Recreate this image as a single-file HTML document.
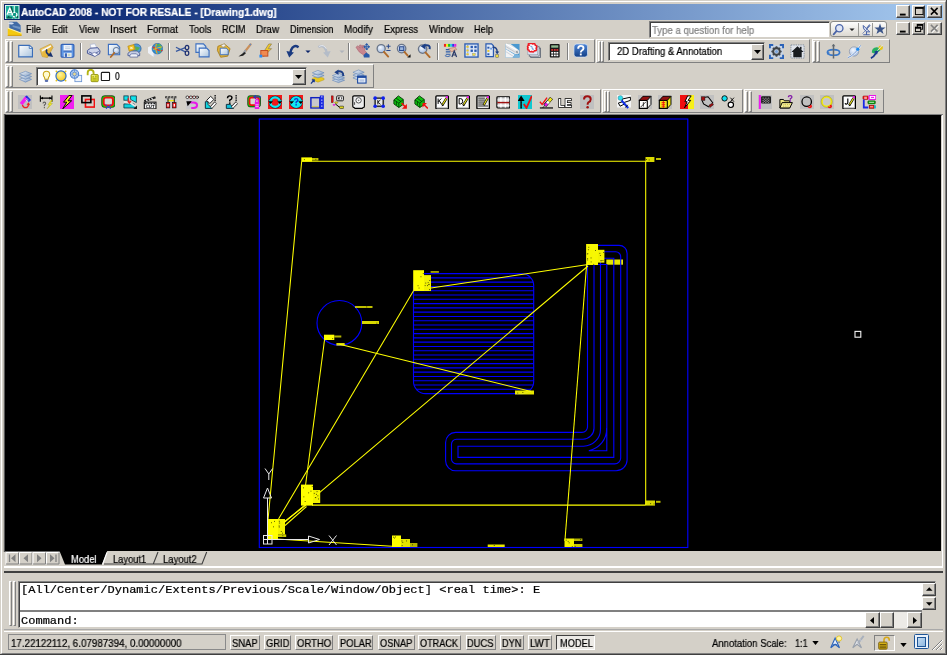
<!DOCTYPE html><html><head><meta charset="utf-8"><title>AutoCAD 2008</title><style>
*{box-sizing:border-box;margin:0;padding:0}
html,body{width:947px;height:655px;overflow:hidden;background:#d4d0c8}
body{position:relative;font-family:"Liberation Sans",sans-serif;font-size:10.4px;color:#000}
.a{position:absolute}
.t{position:absolute;white-space:nowrap;line-height:12px;will-change:transform;-webkit-text-stroke:.22px}
.tb{position:absolute;height:24px;border-top:1px solid #fff;border-left:1px solid #fff;border-right:1px solid #808080;border-bottom:1px solid #808080}
.grip{position:absolute;width:3px;border-top:1px solid #fff;border-left:1px solid #fff;border-right:1px solid #808080;border-bottom:1px solid #808080}
.sep{position:absolute;width:2px;height:17px;border-left:1px solid #808080;border-right:1px solid #fff}
.ic{position:absolute;width:15px;height:15px;will-change:transform}
.btn{position:absolute;background:#d4d0c8;border-top:1px solid #fff;border-left:1px solid #fff;border-right:1px solid #404040;border-bottom:1px solid #404040;box-shadow:inset -1px -1px 0 #808080}
.sunk{position:absolute;border-top:1px solid #808080;border-left:1px solid #808080;border-right:1px solid #fff;border-bottom:1px solid #fff}
.sunk2{position:absolute;background:#fff;border-top:1px solid #808080;border-left:1px solid #808080;border-right:1px solid #d4d0c8;border-bottom:1px solid #d4d0c8;box-shadow:inset 1px 1px 0 #404040}
.sb{position:absolute;top:634.5px;height:15.5px;border-top:1px solid #fff;border-left:1px solid #fff;border-right:1px solid #808080;border-bottom:1px solid #808080}
</style></head><body style="filter:blur(.35px)">
<svg width="0" height="0" style="position:absolute"><defs>
<linearGradient id="gpage" x1="0" y1="0" x2="1" y2="1"><stop offset="0" stop-color="#ffffff"/><stop offset="1" stop-color="#a9c3dd"/></linearGradient>
<linearGradient id="gfold" x1="0" y1="0" x2="1" y2="1"><stop offset="0" stop-color="#f7dc8a"/><stop offset="1" stop-color="#d89b1e"/></linearGradient>
<linearGradient id="gblue" x1="0" y1="0" x2="0" y2="1"><stop offset="0" stop-color="#6f9be0"/><stop offset="1" stop-color="#1f4fa8"/></linearGradient>
<radialGradient id="gglass" cx=".4" cy=".35" r=".7"><stop offset="0" stop-color="#f4f8ff"/><stop offset="1" stop-color="#9db7dc"/></radialGradient>
<radialGradient id="gsun" cx=".4" cy=".35" r=".7"><stop offset="0" stop-color="#fff59a"/><stop offset="1" stop-color="#f2c81e"/></radialGradient>
<linearGradient id="glay" x1="0" y1="0" x2="1" y2="1"><stop offset="0" stop-color="#f6f8fb"/><stop offset="1" stop-color="#7d9bc2"/></linearGradient>
<linearGradient id="ghelp" x1="0" y1="0" x2="0" y2="1"><stop offset="0" stop-color="#4d86d8"/><stop offset="1" stop-color="#123f86"/></linearGradient>
</defs></svg>
<div class="a" style="left:0;top:0;width:947px;height:655px;border-right:1px solid #404040;border-bottom:1px solid #404040"></div>
<div class="a" style="left:1px;top:1px;width:945px;height:653px;border-top:1px solid #fff;border-left:1px solid #fff;border-right:1px solid #808080;border-bottom:1px solid #808080"></div>
<div class="a" style="left:4px;top:4px;width:939px;height:16px;background:linear-gradient(90deg,#0a246a 0%,#12307a 12%,#a6caf0 100%)"></div>
<svg class="a" style="left:5.300px;top:4.800px" width="14.500" height="14.500" viewBox="0 0 16 16"><rect x="0" y="0" width="16" height="16" fill="#eef8f5"/><rect x="1" y="1" width="14" height="14" fill="#1ab39e"/><path d="M4 2.500L7.500 1.500L9.500 9.500L8 10z" fill="#04594a"/><rect x="11.500" y="1.500" width="2.800" height="8" fill="#0d8a78"/><path d="M2 13.500H7.500V14.800H2zM3 11.800H5V13.500H3z" fill="#04594a"/><path d="M9 13.500h1.500v1.300H9zM12.800 12.200h1.700v2.400h-1.700z" fill="#04594a"/><path d="M10.300 1V8" stroke="#cdeee7" stroke-width="1.300"/><path d="M2.300 10.500L5.300 3.300L8.300 10.500M3.400 8.300H7.200" stroke="#fff" stroke-width="1.500" fill="none"/><path d="M1.500 10.800H8.500" stroke="#d8f2ec" stroke-width=".8"/><circle cx="10.600" cy="10.600" r="2.500" fill="#0c9482" stroke="#fff" stroke-width="1.400" stroke-dasharray="2.200 .9"/></svg>
<div class="t" style="left:21.4px;top:5.8px;font-size:11px;font-weight:bold;color:#fff;transform:scaleX(0.9294);transform-origin:0 0;">AutoCAD 2008 - NOT FOR RESALE - [Drawing1.dwg]</div>
<div class="btn" style="left:896.3px;top:5.2px;width:14px;height:12.500px"><svg class="a" style="left:0;top:0" width="12.500" height="10.500" viewBox="0 0 13 11"><rect x="3" y="8" width="6" height="2" fill="#000"/></svg></div>
<div class="btn" style="left:911.5px;top:5.2px;width:13.5px;height:12.500px"><svg class="a" style="left:0;top:0" width="12.500" height="10.500" viewBox="0 0 13 11"><rect x="2.500" y="1.500" width="8" height="7.500" fill="none" stroke="#000"/><rect x="2" y="1" width="9" height="2" fill="#000"/></svg></div>
<div class="btn" style="left:927px;top:5.2px;width:14.7px;height:12.500px"><svg class="a" style="left:0;top:0" width="12.500" height="10.500" viewBox="0 0 13 11"><path d="M3 2L10 9M10 2L3 9" stroke="#000" stroke-width="1.600"/></svg></div>
<div class="btn" style="left:896.3px;top:22.3px;width:14px;height:12.500px"><svg class="a" style="left:0;top:0" width="12.500" height="10.500" viewBox="0 0 13 11"><rect x="3" y="8" width="6" height="2" fill="#000"/></svg></div>
<div class="btn" style="left:911.5px;top:22.3px;width:13.5px;height:12.500px"><svg class="a" style="left:0;top:0" width="12.500" height="10.500" viewBox="0 0 13 11"><rect x="4.500" y="1.500" width="5.500" height="5" fill="none" stroke="#000"/><rect x="4" y="1" width="6.500" height="2" fill="#000"/><rect x="2.500" y="4.500" width="5.500" height="4.500" fill="#d4d0c8" stroke="#000"/><rect x="2" y="4" width="6.500" height="2" fill="#000"/></svg></div>
<div class="btn" style="left:927px;top:22.3px;width:14.7px;height:12.500px"><svg class="a" style="left:0;top:0" width="12.500" height="10.500" viewBox="0 0 13 11"><path d="M4 3L11 10M11 3L4 10" stroke="#fff" stroke-width="1.200"/><path d="M3 2L10 9M10 2L3 9" stroke="#808080" stroke-width="1.600"/></svg></div>
<svg class="a" style="left:7px;top:21.300px" width="15" height="15" viewBox="0 0 16 16"><path d="M2.500 .8H10.500L14.500 4.500V13L2.500 8z" fill="#3f6aa6"/><path d="M6 4.500L14.500 6.500V9L6 6.500z" fill="#6d93c4"/><path d="M1 2.500Q4 0 7.500 2.500Q5 5 1 2.500z" fill="#e4ecf7" opacity=".9"/><path d="M.8 7.500L15.500 13V15.800H.8z" fill="#f4c90f"/><path d="M.8 7.500L15.500 13" stroke="#fdf0a0" stroke-width="1.200"/><path d="M.8 14.800H15.500V15.800H.8z" fill="#d49d0a"/></svg>
<div class="t" style="left:26.0px;top:22.8px;font-size:10.5px;transform:scaleX(0.8865);transform-origin:0 0;">File</div>
<div class="t" style="left:52.0px;top:22.8px;font-size:10.5px;transform:scaleX(0.8567);transform-origin:0 0;">Edit</div>
<div class="t" style="left:79.0px;top:22.8px;font-size:10.5px;transform:scaleX(0.8861);transform-origin:0 0;">View</div>
<div class="t" style="left:109.5px;top:22.8px;font-size:10.5px;transform:scaleX(1.0091);transform-origin:0 0;">Insert</div>
<div class="t" style="left:146.5px;top:22.8px;font-size:10.5px;transform:scaleX(0.9322);transform-origin:0 0;">Format</div>
<div class="t" style="left:188.5px;top:22.8px;font-size:10.5px;transform:scaleX(0.9179);transform-origin:0 0;">Tools</div>
<div class="t" style="left:222.0px;top:22.8px;font-size:10.5px;transform:scaleX(0.8759);transform-origin:0 0;">RCIM</div>
<div class="t" style="left:256.0px;top:22.8px;font-size:10.5px;transform:scaleX(0.9387);transform-origin:0 0;">Draw</div>
<div class="t" style="left:289.5px;top:22.8px;font-size:10.5px;transform:scaleX(0.8769);transform-origin:0 0;">Dimension</div>
<div class="t" style="left:343.5px;top:22.8px;font-size:10.5px;transform:scaleX(0.9377);transform-origin:0 0;">Modify</div>
<div class="t" style="left:383.5px;top:22.8px;font-size:10.5px;transform:scaleX(0.8964);transform-origin:0 0;">Express</div>
<div class="t" style="left:428.5px;top:22.8px;font-size:10.5px;transform:scaleX(0.9238);transform-origin:0 0;">Window</div>
<div class="t" style="left:474.0px;top:22.8px;font-size:10.5px;transform:scaleX(0.8798);transform-origin:0 0;">Help</div>
<div class="sunk2" style="left:648.500px;top:21px;width:181.500px;height:17px"></div>
<div class="t" style="left:651.8px;top:23.6px;font-size:10.5px;color:#808080;transform:scaleX(0.9119);transform-origin:0 0;">Type a question for help</div>
<div class="a" style="left:830px;top:21px;width:57px;height:15.500px;border:1px solid #8a8a86;border-radius:3px;background:linear-gradient(#fdfdfc,#dcd9d2)"></div>
<div class="a" style="left:858px;top:22.500px;width:1px;height:13px;background:#9a9a96"></div>
<div class="a" style="left:872px;top:22.500px;width:1px;height:13px;background:#9a9a96"></div>
<svg class="a" style="left:832px;top:22.500px" width="13" height="13" viewBox="0 0 16 16"><circle cx="9" cy="6.500" r="4.500" fill="#dfe6f6" stroke="#4a64a8" stroke-width="1.600"/><path d="M5.500 10L2 14" stroke="#4a64a8" stroke-width="2.200" stroke-linecap="round"/></svg>
<svg class="a" style="left:848.500px;top:27.500px" width="6" height="3.500" viewBox="0 0 7 4"><path d="M.5 .5h6L3.500 3.500z" fill="#222"/></svg>
<svg class="a" style="left:859.500px;top:22.500px" width="13" height="13" viewBox="0 0 16 16"><path d="M4 3A7 7 0 0 0 12 11Z" fill="#dfe6f6" stroke="#4a64a8" stroke-width="1.200"/><path d="M8 7L12 2M8 11V14M4 14.500H12" stroke="#4a64a8" stroke-width="1.300"/><path d="M3 13L13 3" stroke="#4a64a8" stroke-width=".8"/></svg>
<svg class="a" style="left:874px;top:23px" width="12" height="12" viewBox="0 0 12 12"><path d="M6 .5L7.400 4.400L11.600 4.500L8.300 7L9.500 11L6 8.600L2.500 11L3.700 7L.4 4.500L4.600 4.400z" fill="#3a5488"/></svg>
<div class="tb" style="left:4.5px;top:39px;width:590.5px"></div>
<div class="grip" style="left:6.3px;top:40.5px;height:21px"></div><div class="grip" style="left:9.7px;top:40.5px;height:21px"></div>
<svg class="ic" style="left:18.0px;top:43.4px;width:15px;height:15px" viewBox="0 0 16 16"><path d="M.8 2.500H12.200L15.500 5.500V14.800H.8z" fill="url(#gpage)" stroke="#3a6db8" stroke-width="1.300"/><path d="M12 2.800V5.800H15.200" fill="#f4f8fc" stroke="#3a6db8" stroke-width=".9"/></svg>
<svg class="ic" style="left:39.0px;top:43.4px;width:15px;height:15px" viewBox="0 0 16 16"><path d="M1 6.500L12.500 1L15 4.500L9 15.500L3.500 14.500z" fill="url(#gfold)" stroke="#c49a30" stroke-width=".7"/><path d="M3 7.500L12.500 2.500L13 4L4 10z" fill="#f8fafc"/><path d="M3.500 9L13.500 4L8.500 15L4 14z" fill="#e9b93a" opacity=".85"/><path d="M8.500 7Q6.500 10 10.500 12.500" fill="none" stroke="#16306e" stroke-width="1.800"/><path d="M9 13.800L15 14.800L12.500 9.500z" fill="#16306e"/></svg>
<svg class="ic" style="left:59.5px;top:43.4px;width:15px;height:15px" viewBox="0 0 16 16"><rect x="1.200" y="1.500" width="13.600" height="13.600" rx="1.200" fill="#5f97e4" stroke="#3463b8" stroke-width="1.300"/><rect x="3.800" y="2.200" width="8.600" height="6" fill="#f2f6fb"/><path d="M5.500 4.200H11M5.500 6H11" stroke="#aebfd8" stroke-width=".8"/><path d="M3.800 8.600H12.400" stroke="#2f58a8" stroke-width=".9"/><rect x="4" y="10.500" width="8.400" height="4.400" fill="#e4e9f0"/><rect x="5.200" y="11" width="2.200" height="3.800" fill="#3463b8"/><rect x="8.500" y="11.500" width="2.500" height="2.500" fill="#c8d8c0"/></svg>
<div class="sep" style="left:79.8px;top:43px"></div>
<svg class="ic" style="left:86.3px;top:43.4px;width:15px;height:15px" viewBox="0 0 16 16"><path d="M4.500 1.500L9.500 .8L12 6L5.500 7z" fill="#fafbfe" stroke="#a8b2d0" stroke-width=".7"/><path d="M1.500 8L5 5.500L12.500 5L15 8.500L14.500 11.500L9 14L1.500 11z" fill="#cdd4ea" stroke="#3f4f90" stroke-width="1"/><path d="M3 9.500L8.500 12L13.500 9" fill="none" stroke="#3f4f90" stroke-width=".9"/><path d="M5.500 11.500L9 10L13 12L9.500 14.500z" fill="#f6f7fb" stroke="#5a68a0" stroke-width=".7"/></svg>
<svg class="ic" style="left:106.5px;top:43.4px;width:15px;height:15px" viewBox="0 0 16 16"><path d="M1.500 1.500H10.500L13.500 4.500V12.500H1.500z" fill="url(#gpage)" stroke="#3c6fc0" stroke-width="1.200"/><circle cx="10" cy="8" r="3.300" fill="url(#gglass)" stroke="#6a7f9c" stroke-width="1.100"/><path d="M7.700 10.500L4 15" stroke="#b06a2a" stroke-width="1.800" stroke-linecap="round"/></svg>
<svg class="ic" style="left:127.1px;top:43.4px;width:15px;height:15px" viewBox="0 0 16 16"><circle cx="10" cy="6" r="5" fill="#4f9bd6" stroke="#2a5fa0" stroke-width=".8"/><path d="M7 3q3 2 2 6q3-1 5-4" fill="#58b058" stroke="none"/><path d="M1 11L4 8.500H11L13.500 11V13.500H1z" fill="#c3cce4" stroke="#44558f" stroke-width=".9"/><path d="M3 13L5 11.500H10L11.500 13V15H3z" fill="#eef1f8" stroke="#44558f" stroke-width=".7"/><rect x="1.500" y="2.500" width="6.500" height="5.500" fill="#f0c020" stroke="#b88a10" stroke-width=".7" transform="rotate(-15 4.500 5)"/><path d="M3.500 4.500l2.500 1.500M6 4l-2.500 2.500" stroke="#fff" stroke-width=".9"/></svg>
<svg class="ic" style="left:148.3px;top:43.4px;width:15px;height:15px" viewBox="0 0 16 16"><path d="M0 4.500L5.500 2L6.100 8.800L6.100 14.900L0 10.700z" fill="#eef1f7"/><path d="M6.100 8.800V14.900L11.800 11.600V8z" fill="#c9d0dc"/><circle cx="10" cy="6" r="5.700" fill="#2f8fd4" stroke="#2a62a0" stroke-width=".6"/><path d="M8.500 2Q11 0 14 2.500Q12 4 10 3.500z" fill="#48b060"/><path d="M5 4Q10 8.500 15.500 8" stroke="#e23a2a" stroke-width="1.300" fill="none"/><path d="M9 .8Q7 6.500 10 11.500" stroke="#e8a820" stroke-width="1.200" fill="none"/><path d="M12 1.200Q15 5 12.500 10.500" stroke="#58b858" stroke-width="1.100" fill="none"/><path d="M5.500 7Q10 5 15.200 4" stroke="#e8c020" stroke-width="1" fill="none"/></svg>
<div class="sep" style="left:167.8px;top:43px"></div>
<svg class="ic" style="left:174.5px;top:43.4px;width:15px;height:15px" viewBox="0 0 16 16"><path d="M1 4.500L11 9.500M1 9L11 5" stroke="#3a5aa0" stroke-width="1.300" fill="none"/><ellipse cx="12.800" cy="4.800" rx="1.900" ry="2.300" fill="none" stroke="#1d2f70" stroke-width="1.300"/><ellipse cx="12.800" cy="10.800" rx="1.900" ry="2.300" fill="none" stroke="#1d2f70" stroke-width="1.300"/></svg>
<svg class="ic" style="left:195.2px;top:43.4px;width:15px;height:15px" viewBox="0 0 16 16"><path d="M1 1H9L11.500 3.500V10H1z" fill="url(#gpage)" stroke="#3c6fc0" stroke-width="1.200"/><path d="M4.500 5.500H12.500L15 8V14.800H4.500z" fill="url(#gpage)" stroke="#3c6fc0" stroke-width="1.200"/></svg>
<svg class="ic" style="left:215.5px;top:43.4px;width:15px;height:15px" viewBox="0 0 16 16"><path d="M2 3.500L9 1L15 6L12.500 14L5 15.200L1.500 8z" fill="#e2b43a" stroke="#a87d18" stroke-width=".9"/><path d="M5.500 2.500l3-1.500l2 1.500l-3 2z" fill="#f4f4f4" stroke="#909090" stroke-width=".5"/><path d="M4.500 5.500H11L13 7.500V12.500H4.500z" fill="url(#gpage)" stroke="#3c6fc0" stroke-width="1"/></svg>
<svg class="ic" style="left:237.3px;top:43.4px;width:15px;height:15px" viewBox="0 0 16 16"><path d="M14.500 1.500L8.500 9" stroke="#c98f5a" stroke-width="2.400" stroke-linecap="round"/><path d="M13.500 1L14.800 2.200" stroke="#5a8ad0" stroke-width="1.500"/><path d="M9.500 7.500L7 11" stroke="#9aa0a8" stroke-width="2.400"/><path d="M8 9.500L1.500 14.500L6.500 13.500L9.500 11z" fill="#222"/></svg>
<svg class="ic" style="left:257.5px;top:43.4px;width:15px;height:15px" viewBox="0 0 16 16"><path d="M11.500 1L7 8H10L6 14.500L14.500 6H11L14.500 1z" fill="#f0c828" stroke="#8a7a50" stroke-width=".7"/><rect x="3" y="8" width="7.500" height="6" fill="#f08a50" stroke="#c04a20" stroke-width="1"/><rect x="1.500" y="12.500" width="3" height="3" fill="#2a8af0"/></svg>
<div class="sep" style="left:277.5px;top:43px"></div>
<svg class="ic" style="left:285.1px;top:43.4px;width:15px;height:15px" viewBox="0 0 16 16"><path d="M14.500 4.500Q9 1 6.500 7.500L5.500 11" fill="none" stroke="#1a3a80" stroke-width="2.600"/><path d="M1.500 8.500L9.500 10L4.500 15.500z" fill="#1a3a80"/></svg>
<svg class="a" style="left:305.4px;top:49.5px" width="6" height="3.500" viewBox="0 0 7 4"><path d="M.5 .5h6L3.500 3.500z" fill="#0a246a"/></svg>
<svg class="ic" style="left:317.2px;top:43.4px;width:15px;height:15px" viewBox="0 0 16 16"><path d="M1.500 4.500Q7 1 9.500 7.500L10.500 11" fill="none" stroke="#b4bcc8" stroke-width="2.600"/><path d="M14.500 8.500L6.500 10L11.500 15.500z" fill="#b4bcc8"/><path d="M2 3.800Q7 .8 9.800 6" fill="none" stroke="#eef0f4" stroke-width=".9"/></svg>
<svg class="a" style="left:338.5px;top:49.5px" width="6" height="3.500" viewBox="0 0 7 4"><path d="M.5 .5h6L3.500 3.500z" fill="#b0b4bc"/></svg>
<div class="sep" style="left:347.7px;top:43px"></div>
<svg class="ic" style="left:354.5px;top:43.4px;width:15px;height:15px" viewBox="0 0 16 16"><path d="M1 4.500L3 3L5.500 5.500L4.500 2.500L6.500 2L8 5.500L8 2.500L10 3L10.500 8L12.500 10.500L9.500 13L4.500 9.500z" fill="#c8868e" stroke="#a8606c" stroke-width=".6"/><path d="M9 13L12 10L15.500 12.500V15.500H9.500z" fill="#2a5aa8"/><path d="M12.500 1V7M9.800 4H15.200M12.500 .5l-1.200 1.500h2.400zM12.500 7.500l-1.200-1.500h2.400zM9.300 4l1.500-1.200v2.400zM15.700 4l-1.500-1.200v2.400z" stroke="#2a5aa8" stroke-width=".9" fill="#2a5aa8"/></svg>
<svg class="ic" style="left:375.5px;top:43.4px;width:15px;height:15px" viewBox="0 0 16 16"><circle cx="5.500" cy="6" r="4.300" fill="url(#gglass)" stroke="#6a7588" stroke-width="1.400"/><path d="M8.500 9.500L13 14.500" stroke="#b06a2a" stroke-width="2" stroke-linecap="round"/><path d="M11 3.500H15.500M13.200 1.200V5.800M11 8H15.500" stroke="#2a4a90" stroke-width="1.100"/></svg>
<svg class="ic" style="left:396.0px;top:43.4px;width:15px;height:15px" viewBox="0 0 16 16"><circle cx="6" cy="6" r="4.500" fill="url(#gglass)" stroke="#6a7588" stroke-width="1.400"/><rect x="3.800" y="4" width="4.500" height="4" fill="#9db7dc" stroke="#2a4a90" stroke-width="1.100"/><path d="M9 9.500L12.500 13.500" stroke="#b06a2a" stroke-width="2" stroke-linecap="round"/><path d="M15.500 12V15.500H12z" fill="#111"/></svg>
<svg class="ic" style="left:416.5px;top:43.4px;width:15px;height:15px" viewBox="0 0 16 16"><circle cx="6" cy="6.500" r="4.500" fill="url(#gglass)" stroke="#6a7588" stroke-width="1.400"/><path d="M9 10L13.500 15" stroke="#b06a2a" stroke-width="2" stroke-linecap="round"/><path d="M13.500 6.500Q14.500 1.500 8.500 2.500" fill="none" stroke="#1d3f86" stroke-width="2.200"/><path d="M4 3.500L9 0.500V7z" fill="#1d3f86"/></svg>
<div class="sep" style="left:437.0px;top:43px"></div>
<svg class="ic" style="left:443.3px;top:43.4px;width:15px;height:15px" viewBox="0 0 16 16"><rect x="1" y="1" width="2.200" height="3" fill="#f02020"/><rect x="3.200" y="1" width="2.200" height="3" fill="#f0f020"/><rect x="5.400" y="1" width="2.200" height="3" fill="#20c020"/><rect x="7.600" y="1" width="2.200" height="3" fill="#20d0e0"/><rect x="9.800" y="1" width="2.200" height="3" fill="#3030f0"/><rect x="12" y="1" width="2.200" height="3" fill="#e020e0"/><path d="M3 7H8M3 9.500H8M3 12H8" stroke="#2a5aa8" stroke-width="1.200"/><path d="M2 13.500Q5 15.500 8 13.500" stroke="#2a5aa8" stroke-width="1" fill="none"/><path d="M6 6L13 4.500L14.500 7L9 9.500z" fill="#e8b8a0" stroke="#a86a58" stroke-width=".6"/><path d="M9.500 15L12 8.500L14.500 15M10.500 12.800H13.500" stroke="#2a3a68" stroke-width="1.300" fill="none"/></svg>
<svg class="ic" style="left:463.5px;top:43.4px;width:15px;height:15px" viewBox="0 0 16 16"><rect x="1" y="1" width="14" height="14" fill="#dfe8f6" stroke="#2a5ab0" stroke-width="1.400"/><path d="M4 2V14" stroke="#2a5ab0" stroke-width=".8" stroke-dasharray="1 1"/><rect x="2.500" y="3" width="2.500" height="2" fill="#e8c830"/><rect x="2.500" y="7" width="2.500" height="2" fill="#e8c830"/><rect x="2.500" y="11" width="2.500" height="2" fill="#e8c830"/><rect x="7" y="3" width="2.500" height="2.500" fill="#2a5ab0"/><rect x="11" y="3" width="2.500" height="2.500" fill="#2a5ab0"/><rect x="7" y="7" width="2.500" height="2.500" fill="#2a5ab0"/><rect x="11" y="7" width="2.500" height="2.500" fill="#2a5ab0"/><rect x="9" y="11" width="3" height="2.500" fill="#f0e040" stroke="#888" stroke-width=".4"/></svg>
<svg class="ic" style="left:484.5px;top:43.4px;width:15px;height:15px" viewBox="0 0 16 16"><path d="M1 1H7L9 3V14.500H1z" fill="#dfe8f6" stroke="#2a5ab0" stroke-width="1.300"/><rect x="2.500" y="4" width="2.200" height="2" fill="#2a5ab0"/><rect x="2.500" y="7.500" width="2.200" height="2" fill="#e8c830"/><rect x="2.500" y="11" width="2.200" height="2" fill="#2a5ab0"/><rect x="5.500" y="5" width="2" height="2" fill="#6a9ae0"/><path d="M8 4.500Q13 4 13 9.500" fill="none" stroke="#1d3f86" stroke-width="1.500"/><path d="M10.800 9L13 12L15.200 9z" fill="#1d3f86"/><rect x="11.500" y="12.500" width="3" height="2.800" fill="#f0e040" stroke="#555" stroke-width=".5"/></svg>
<svg class="ic" style="left:505.2px;top:43.4px;width:15px;height:15px" viewBox="0 0 16 16"><rect x=".5" y="1" width="15" height="14.500" fill="#4a98d0"/><path d="M.5 1H6L14.500 7.500Q16 10 14 11.500L11 12L.5 6z" fill="#e4e7ea"/><path d="M.5 3.500L12 10.500" stroke="#b4bac0" stroke-width=".8"/><path d="M1 1L13.500 8" stroke="#fff" stroke-width="1.200"/><ellipse cx="12.800" cy="9.800" rx="1.500" ry="2" fill="#9aa2aa" stroke="#f4f4f4" stroke-width=".7" transform="rotate(-30 12.800 9.800)"/><path d="M.5 6.500L10.500 12.500L8 15.500H.5z" fill="#f2f3f5"/><path d="M.5 9L8.500 14" stroke="#c0c6cc" stroke-width=".8"/><path d="M8 15.500L11 12L15.500 13V15.500z" fill="#7ab4dc"/></svg>
<svg class="ic" style="left:526.0px;top:43.4px;width:15px;height:15px" viewBox="0 0 16 16"><rect x="5" y="5.500" width="10.500" height="10" fill="#e8eef8" stroke="#5a6270" stroke-width=".9"/><rect x="3.500" y="4" width="10.500" height="10" fill="#eef3fb" stroke="#5a6270" stroke-width=".9"/><rect x="2" y="2.500" width="10.500" height="10" fill="#dfe8f6" stroke="#8a94a4" stroke-width=".6"/><path d="M3 2.500Q1.500 .5 4 .8Q5.500 -.5 7 1Q9.500 0 10 2.500Q12.500 3.500 10.800 5.500Q12 8.500 9 8.300Q8 10.500 6 9Q3.500 10 3.200 7.800Q.8 7 2.200 5Q.8 3.500 3 2.500z" fill="#f8fbff" stroke="#ee1c24" stroke-width="1.700"/><path d="M4.500 3.500Q6.500 3 6.500 5Q6.500 7 8.500 6.500" fill="none" stroke="#6aa0d8" stroke-width="1.100"/></svg>
<svg class="ic" style="left:547.0px;top:43.4px;width:15px;height:15px" viewBox="0 0 16 16"><rect x="3" y="1" width="10.500" height="14.500" rx="1" fill="#181818"/><rect x="4.500" y="2.500" width="7.500" height="2.500" fill="#8fb88f"/><rect x="4.500" y="6.500" width="2" height="1.800" fill="#e03030"/><rect x="7.300" y="6.500" width="2" height="1.800" fill="#e03030"/><rect x="10" y="6.500" width="2" height="1.800" fill="#e03030"/><rect x="4.500" y="9.500" width="2" height="1.800" fill="#fff"/><rect x="7.300" y="9.500" width="2" height="1.800" fill="#fff"/><rect x="10" y="9.500" width="2" height="1.800" fill="#fff"/><rect x="4.500" y="12.300" width="2" height="1.800" fill="#fff"/><rect x="7.300" y="12.300" width="2" height="1.800" fill="#fff"/><rect x="10" y="12.300" width="2" height="1.800" fill="#fff"/></svg>
<div class="sep" style="left:567.1px;top:43px"></div>
<svg class="ic" style="left:573.4px;top:43.4px;width:15px;height:15px" viewBox="0 0 16 16"><rect x="1" y="1" width="14.500" height="14" rx="3" fill="url(#ghelp)" stroke="#d8e4f4" stroke-width=".8"/><path d="M5.500 6Q5.500 3 8.300 3Q11.200 3 11.200 5.500Q11.200 7 9.500 8Q8.300 8.800 8.300 10" fill="none" stroke="#fff" stroke-width="2"/><rect x="7.300" y="11.200" width="2" height="2" fill="#fff"/></svg>
<div class="tb" style="left:596px;top:39px;width:214px"></div>
<div class="grip" style="left:597.8px;top:40.5px;height:21px"></div><div class="grip" style="left:601.2px;top:40.5px;height:21px"></div>
<svg class="ic" style="left:768.5px;top:43.6px;width:15px;height:15px" viewBox="0 0 16 16"><rect x="1" y="1" width="14" height="14" fill="#c8d4e4"/><path d="M1 4.500V1H4.500M11.500 1H15V4.500M15 11.500V15H11.500M4.500 15H1V11.500" fill="none" stroke="#2a62b8" stroke-width="2"/><circle cx="8" cy="8" r="3.600" fill="none" stroke="#404448" stroke-width="2.200"/><path d="M8 2.500V4M8 12V13.500M2.500 8H4M12 8H13.500M4.200 4.200l1 1M10.800 10.800l1 1M4.200 11.800l1-1M10.800 5.200l1-1" stroke="#404448" stroke-width="1.800"/><circle cx="8" cy="8" r="1.600" fill="#7aa4dc"/></svg>
<svg class="ic" style="left:789.5px;top:43.6px;width:15px;height:15px" viewBox="0 0 16 16"><rect x="1" y="1" width="14" height="14" fill="#e0e4ea" stroke="#6a7a90" stroke-width=".8" stroke-dasharray="1.500 1"/><path d="M2 8L8 2.500L14 8V8.500H12.500V14H3.500V8.500H2z" fill="#181c20"/><rect x="10.500" y="3" width="1.800" height="3" fill="#181c20"/></svg>
<div class="sunk2" style="left:608px;top:41.500px;width:157px;height:19.500px"></div>
<div class="t" style="left:616.5px;top:45.3px;font-size:10.5px;transform:scaleX(0.9094);transform-origin:0 0;">2D Drafting &amp; Annotation</div>
<div class="btn" style="left:750.5px;top:43.5px;width:13.5px;height:16.5px"><svg class="a" style="left:2.25px;top:5.75px" width="7" height="4" viewBox="0 0 7 4"><path d="M0 0h7L3.500 4z" fill="#000"/></svg></div>
<div class="tb" style="left:811.5px;top:39px;width:78.0px"></div>
<div class="grip" style="left:813.3px;top:40.5px;height:21px"></div><div class="grip" style="left:816.7px;top:40.5px;height:21px"></div>
<svg class="ic" style="left:826.0px;top:43.6px;width:15px;height:15px" viewBox="0 0 16 16"><ellipse cx="8" cy="9" rx="6.500" ry="3" fill="none" stroke="#3a78c8" stroke-width="1.800"/><path d="M8 .5V15.500" stroke="#606870" stroke-width="1.600"/><path d="M6 2.500L8 0L10 2.500z" fill="#606870"/><path d="M1.500 11.500L1 8L4.500 9.500z" fill="#3a78c8"/></svg>
<svg class="ic" style="left:846.5px;top:43.6px;width:15px;height:15px" viewBox="0 0 16 16"><circle cx="7.500" cy="8" r="5" fill="url(#gglass)" stroke="#9098a8" stroke-width=".8"/><path d="M1 14.500Q8 12 14.500 1.500" fill="none" stroke="#e8eef8" stroke-width="2.200"/><path d="M1 14.500Q8 12 14.500 1.500" fill="none" stroke="#4a78c0" stroke-width=".8"/><circle cx="11.500" cy="5.500" r="1.700" fill="#1a8af0"/></svg>
<svg class="ic" style="left:868.9px;top:43.6px;width:15px;height:15px" viewBox="0 0 16 16"><path d="M3 9Q3 4 8 3.500Q12 3.500 12.500 6.500Q10 9.500 5.500 10z" fill="#28b060"/><path d="M2 15Q5 14 7.500 9.500" fill="none" stroke="#1a3a90" stroke-width="2"/><path d="M5.500 8L10 7L8.500 11.500z" fill="#1a3a90"/><circle cx="12.500" cy="4" r="2.400" fill="#e8c818"/><path d="M14.500 1L9 7" stroke="#e4e8f0" stroke-width="1"/></svg>
<div class="tb" style="left:4.5px;top:64px;width:369.0px"></div>
<div class="grip" style="left:6.3px;top:65.5px;height:21px"></div><div class="grip" style="left:9.7px;top:65.5px;height:21px"></div>
<svg class="ic" style="left:17.8px;top:69px;width:15px;height:15px" viewBox="0 0 16 16"><path d="M1.500 11L8 8.500L14.500 11L8 14z" fill="url(#glay)" stroke="#5a7fb4" stroke-width=".6"/><path d="M1.500 8L8 5.500L14.500 8L8 11z" fill="url(#glay)" stroke="#5a7fb4" stroke-width=".6"/><path d="M1.500 5L8 2.500L14.500 5L8 8z" fill="url(#glay)" stroke="#5a7fb4" stroke-width=".6"/></svg>
<svg class="ic" style="left:309.9px;top:69px;width:15px;height:15px" viewBox="0 0 16 16"><path d="M2.500 10L8.500 7.500L15 10V11.500L8.500 14L2.500 11.500z" fill="#e8c820" stroke="#b89810" stroke-width=".5"/><path d="M2.500 7L8.500 4.500L15 7L8.500 9.500z" fill="url(#glay)" stroke="#5a7fb4" stroke-width=".6"/><path d="M2.500 4L8.500 1.500L15 4L8.500 6.500z" fill="url(#glay)" stroke="#5a7fb4" stroke-width=".6"/><path d="M1 15.500L4 12M2 11.500H4.500V14" stroke="#1a3a90" stroke-width="1.300" fill="none"/></svg>
<svg class="ic" style="left:330.8px;top:69px;width:15px;height:15px" viewBox="0 0 16 16"><path d="M1.500 12L8 9.500L14.500 12L8 14.500z" fill="url(#glay)" stroke="#5a7fb4" stroke-width=".6"/><path d="M1.500 9.500L8 7L14.500 9.500L8 12z" fill="url(#glay)" stroke="#5a7fb4" stroke-width=".6"/><path d="M1.500 7L8 4.500L14.500 7L8 9.500z" fill="url(#glay)" stroke="#5a7fb4" stroke-width=".6"/><path d="M13 7.500Q13.500 2 7.500 2.500" fill="none" stroke="#1d3f86" stroke-width="2"/><path d="M3.500 3.500L8 .5V6.500z" fill="#1d3f86"/></svg>
<svg class="ic" style="left:352.0px;top:69px;width:15px;height:15px" viewBox="0 0 16 16"><path d="M1 9.500L7 7L13 9.500L7 12z" fill="url(#glay)" stroke="#5a7fb4" stroke-width=".6"/><path d="M1 6.500L7 4L13 6.500L7 9z" fill="url(#glay)" stroke="#5a7fb4" stroke-width=".6"/><path d="M1 3.500L7 1L13 3.500L7 6z" fill="url(#glay)" stroke="#5a7fb4" stroke-width=".6"/><rect x="6" y="7.500" width="9" height="7.500" fill="#e8eef8" stroke="#1d4aa0" stroke-width="1.200"/><rect x="6" y="7.500" width="9" height="2" fill="#1d4aa0"/><rect x="8" y="11" width="5" height="2.500" fill="#b8c8e4"/></svg>
<div class="sunk2" style="left:36px;top:67px;width:270.500px;height:18.500px"></div>
<div class="btn" style="left:291.6px;top:69px;width:14px;height:15.5px"><svg class="a" style="left:2.5px;top:5.25px" width="7" height="4" viewBox="0 0 7 4"><path d="M0 0h7L3.500 4z" fill="#000"/></svg></div>
<svg class="a" style="left:40.0px;top:69.5px" width="13" height="13" viewBox="0 0 16 16"><path d="M8 1.500Q12 1.500 12 5.500Q12 7.500 10.500 9L10 11.500H6L5.500 9Q4 7.500 4 5.500Q4 1.500 8 1.500z" fill="#fffbd0" stroke="#c8a418" stroke-width="1.300"/><path d="M6 12H10V14Q8 15.500 6 14z" fill="#5a70b0"/></svg>
<svg class="a" style="left:54.0px;top:69.0px" width="14" height="14" viewBox="0 0 16 16"><path d="M2 2L14 14M14 2L2 14" stroke="#e8c418" stroke-width="1.600"/><circle cx="8" cy="8" r="5.800" fill="url(#gsun)" stroke="#2a6ac8" stroke-width="1.300"/></svg>
<svg class="a" style="left:69.2px;top:69.2px" width="13.5" height="13.5" viewBox="0 0 16 16"><rect x="7" y="7.500" width="8" height="7.500" fill="#eef3fa" stroke="#6a94d0" stroke-width="1"/><circle cx="6.500" cy="6" r="5" fill="#b8d0f0" stroke="#4a80d0" stroke-width="1.200"/><circle cx="6.500" cy="6" r="2.200" fill="#e8d890" stroke="#4a80d0" stroke-width=".8"/><path d="M6.500 1V3.500M6.500 8.500V11M1.500 6H4M9 6H11.500M3 2.500l1.700 1.700M8.300 7.800l1.700 1.700M3 9.500l1.700-1.700M8.300 4.200l1.700-1.700" stroke="#4a80d0" stroke-width=".7"/></svg>
<svg class="a" style="left:85.7px;top:69.2px" width="13.5" height="13.5" viewBox="0 0 16 16"><path d="M2 7.500V4.500Q2 1 5.500 1Q9 1 9 4.500V6" fill="none" stroke="#b4b414" stroke-width="2.200"/><rect x="6" y="6.500" width="8.500" height="8.500" rx="1" fill="#d8d830" stroke="#8c8c0a" stroke-width="1"/><path d="M8 9H12.500M8 11H12.500M8 13H12.500" stroke="#9a9a18" stroke-width=".8"/><path d="M7 7.500H10V10" stroke="#f4f4a0" stroke-width=".9" fill="none"/></svg>
<svg class="a" style="left:98.8px;top:69.8px" width="12.5" height="12.5" viewBox="0 0 16 16"><rect x="3" y="3" width="10.500" height="10.500" rx="1" fill="#fff" stroke="#181818" stroke-width="1.400"/></svg>
<div class="t" style="left:115.0px;top:70.1px;font-size:10.5px;transform:scaleX(0.8048);transform-origin:0 0;">0</div>
<div class="tb" style="left:4.5px;top:89px;width:596.5px"></div>
<div class="grip" style="left:6.3px;top:90.5px;height:21px"></div><div class="grip" style="left:9.7px;top:90.5px;height:21px"></div>
<svg class="ic" style="left:18.1px;top:94.9px;width:14.3px;height:14.3px" viewBox="0 0 16 16"><rect x="0" y="0" width="16" height="16" fill="#c0c0c0"/><path d="M2 9L8 1.500L11 4L5 11.500z" fill="#f020f0"/><path d="M8 1.500L10 .5L14.500 5.500L12 8z" fill="#2030e0"/><path d="M9.500 3.500L12 6M8.500 5L10.500 7" stroke="#fff" stroke-width=".7"/><path d="M5 11Q6 15.500 10.500 13.500Q12 12.500 11.500 10" fill="none" stroke="#f02020" stroke-width="1.500"/><path d="M9.500 10.500L12 8L13.500 11.500z" fill="#f02020"/></svg>
<svg class="ic" style="left:39.1px;top:94.9px;width:14.3px;height:14.3px" viewBox="0 0 16 16"><path d="M1.500 .5V7.500M14.500 .5V7.500M1.500 3.500H14.500" stroke="#000" stroke-width="1.200"/><path d="M2 3.500L4.500 2V5zM14 3.500L11.500 2V5z" fill="#000"/><path d="M4.500 9.500Q4.500 8 6 8Q7.500 8 7.500 9.500Q7.500 10.500 6 11.200V12.500" fill="none" stroke="#606060" stroke-width="1.200"/><rect x="5.400" y="13.500" width="1.300" height="1.300" fill="#606060"/><path d="M13.500 6L10 11H12L9 15.500L15 9.500H12.500L15 6z" fill="#f8f020" stroke="#a09800" stroke-width=".4"/></svg>
<svg class="ic" style="left:59.9px;top:94.9px;width:14.3px;height:14.3px" viewBox="0 0 16 16"><rect x="0" y="0" width="16" height="16" fill="#f020f0"/><path d="M10 .5L4 8H7.500L3 15.500L13 6.500H9L13.500 .5z" fill="#f8f020" stroke="#000" stroke-width="1.100"/></svg>
<svg class="ic" style="left:80.5px;top:94.9px;width:14.3px;height:14.3px" viewBox="0 0 16 16"><rect x="5" y="5" width="10" height="8.500" fill="none" stroke="#f01010" stroke-width="1.800"/><rect x="1" y="1" width="10" height="7.500" fill="none" stroke="#000" stroke-width="1.800"/></svg>
<svg class="ic" style="left:101.4px;top:94.9px;width:14.3px;height:14.3px" viewBox="0 0 16 16"><rect x=".8" y=".8" width="14.800" height="13" rx="3" fill="#08e808" stroke="#000" stroke-width=".7"/><rect x="3" y="2.800" width="10.400" height="9" rx="2.500" fill="#d6d6d2" stroke="#f01010" stroke-width="2.200"/><path d="M5 10.500L11.500 16M11.500 10.500L5 16" stroke="#2040f0" stroke-width="1.100"/></svg>
<svg class="ic" style="left:122.8px;top:94.9px;width:14.3px;height:14.3px" viewBox="0 0 16 16"><rect x="1" y="1" width="4.800" height="4.800" fill="#10e4ec" stroke="#103848" stroke-width=".9"/><path d="M8.500 1H15V8.500L8.500 5z" fill="#10e4ec" stroke="#103848" stroke-width=".9"/><path d="M1 10H12.500L13.500 14.500H1z" fill="#10d0dc" stroke="#103848" stroke-width=".9"/><path d="M1 7.800L8 8.800L14 12.500" stroke="#e8e8e8" stroke-width="2" fill="none"/><path d="M5.500 3.500L7.200 8.500M5.200 7L7.400 9L9 6.500" stroke="#f02020" stroke-width="1.300" fill="none"/><path d="M15.800 11.500V15.800H11.500z" fill="#181818"/></svg>
<svg class="ic" style="left:143.3px;top:94.9px;width:14.3px;height:14.3px" viewBox="0 0 16 16"><path d="M1 6L13.500 1.500L14.500 3.500L2 8z" fill="#202020"/><path d="M3.500 5.200l1.500 2M6.500 4.200l1.500 2M9.500 3.200l1.500 2" stroke="#e8e8e8" stroke-width="1.200"/><rect x="1.500" y="8" width="13" height="7.500" fill="#f4f4f4" stroke="#202020" stroke-width="1.300"/><path d="M2 9.500H14" stroke="#202020" stroke-width="1.600" stroke-dasharray="2 1.200"/><text x="8" y="14.600" font-family="Liberation Sans,sans-serif" font-size="4.800" font-weight="bold" text-anchor="middle" fill="#000">CUT</text></svg>
<svg class="ic" style="left:163.8px;top:94.9px;width:14.3px;height:14.3px" viewBox="0 0 16 16"><rect x="0" y="0" width="16" height="16" opacity=".0" fill="#c0c0c0"/><rect x="1" y="4.500" width="14" height="10.500" fill="#c8c8cc"/><path d="M1.500 2.500H14.500" stroke="#000" stroke-width="2.400" stroke-dasharray="2.200 1.200"/><path d="M2 2.500H14" stroke="#fff" stroke-width=".8" stroke-dasharray="1.200 2.200" stroke-dashoffset="-.5"/><rect x="4" y="5.500" width="8" height="1.600" fill="#f0e820"/><path d="M4.500 3.500V9M11.500 3.500V9" stroke="#000" stroke-width="1"/><rect x="2.500" y="8.500" width="4" height="6" fill="#f01010" stroke="#000" stroke-width=".6"/><rect x="9.500" y="8.500" width="4" height="6" fill="#f01010" stroke="#000" stroke-width=".6"/><rect x="3.800" y="10" width="1.400" height="3" fill="#fff"/><rect x="10.800" y="10" width="1.400" height="3" fill="#fff"/></svg>
<svg class="ic" style="left:184.5px;top:94.9px;width:14.3px;height:14.3px" viewBox="0 0 16 16"><rect x="1.500" y="4.500" width="13.500" height="11" fill="#c8c8cc"/><path d="M1 2.500H14" stroke="#000" stroke-width="1.400"/><path d="M14 .8L16 2.500L14 4.200z" fill="#000"/><rect x="4" y="1.500" width="1.800" height="2" fill="#f01010"/><rect x="7.500" y="1.500" width="1.800" height="2" fill="#f01010"/><rect x="11" y="1.500" width="1.800" height="2" fill="#f01010"/><circle cx="2.600" cy="2.500" r="1.500" fill="#fff" stroke="#000" stroke-width=".7"/><circle cx="6.600" cy="2.500" r="1.500" fill="#fff" stroke="#000" stroke-width=".7"/><circle cx="10.200" cy="2.500" r="1.500" fill="#fff" stroke="#000" stroke-width=".7"/><circle cx="13.500" cy="2.500" r="1.300" fill="#fff" stroke="#000" stroke-width=".7"/><path d="M5 8.500H9.500Q13.500 8.500 13.500 11.500Q13.500 14.500 9.500 14.500H7" fill="none" stroke="#e818e8" stroke-width="2.200"/><path d="M1.500 7H7.500L3 12.500z" fill="#000"/></svg>
<svg class="ic" style="left:204.2px;top:94.9px;width:14.3px;height:14.3px" viewBox="0 0 16 16"><path d="M1.500 7.500V15H9L4.500 10.500V7.500z" fill="#10d8e0" stroke="#103040" stroke-width="1.100"/><path d="M3 6L7.500 1.500L11 5L6.500 9.500z" fill="#fff" stroke="#202020" stroke-width="1.100"/><path d="M12.500 0V8" stroke="#303030" stroke-width="1.800" stroke-dasharray="1.800 .7"/><path d="M13 8.500L8 14" stroke="#202020" stroke-width="3.400"/><path d="M12.800 8.800L8.200 13.800" stroke="#fff" stroke-width="1.800"/></svg>
<svg class="ic" style="left:225.2px;top:94.9px;width:14.3px;height:14.3px" viewBox="0 0 16 16"><path d="M2.800 3.500Q2.800 1 5.300 1Q7.800 1 7.800 3.200Q7.800 4.800 5.300 5.800V7.300" fill="none" stroke="#000" stroke-width="1.600"/><rect x="4.400" y="8.300" width="1.800" height="1.600" fill="#000"/><path d="M1.500 10.500H6L9.500 15H1.500z" fill="#10c0d8" stroke="#103040" stroke-width="1.100"/><path d="M12.500 0V8" stroke="#303030" stroke-width="1.800" stroke-dasharray="1.800 .7"/><path d="M13.200 8.500L8 14" stroke="#202020" stroke-width="3.400"/><path d="M13 8.800L8.200 13.800" stroke="#fff" stroke-width="1.800"/></svg>
<svg class="ic" style="left:246.8px;top:94.9px;width:14.3px;height:14.3px" viewBox="0 0 16 16"><rect x=".8" y=".8" width="14.400" height="12.500" rx="2.500" fill="#08e808" stroke="#000" stroke-width=".7"/><rect x="2.800" y="2.800" width="10.400" height="8.500" rx="2" fill="#d8d8d4" stroke="#f01010" stroke-width="2"/><path d="M7.500 2.200H15.500M7.500 2.200L10 .3M7.500 2.200L10 4.200" stroke="#1030e0" stroke-width="1.100" fill="none"/><path d="M9.700 8V6.300Q9.700 4.800 11.200 4.800Q12.700 4.800 12.700 6.300V8" fill="none" stroke="#e818e8" stroke-width="1.400"/><rect x="8.700" y="7.800" width="5" height="8" fill="#e818e8"/><path d="M9.500 11H13M9.500 13H13" stroke="#fff" stroke-width=".8"/></svg>
<svg class="ic" style="left:268.1px;top:94.9px;width:14.3px;height:14.3px" viewBox="0 0 16 16"><rect x="0" y="0" width="16" height="16" fill="#f01818"/><circle cx="8" cy="8" r="5.300" fill="none" stroke="#003038" stroke-width="3.800"/><circle cx="8" cy="8" r="5.300" fill="#f01818" stroke="#10e8f0" stroke-width="2.600"/><rect x="0" y="6.800" width="4.500" height="2" fill="#f01818"/><rect x="11.500" y="7" width="4.500" height="2" fill="#f01818"/><path d="M10.200 6.500H16L13.100 10zM0 6.500H5.800L2.900 10z" fill="#000"/><path d="M.8 6.500H5M11 6.500H15.200" stroke="#10e8f0" stroke-width="1"/></svg>
<svg class="ic" style="left:288.6px;top:94.9px;width:14.3px;height:14.3px" viewBox="0 0 16 16"><rect x="0" y="0" width="16" height="16" fill="#f01818"/><circle cx="8" cy="8" r="5.300" fill="none" stroke="#003038" stroke-width="3.800"/><circle cx="8" cy="8" r="5.300" fill="#10e8f0" stroke="#10e8f0" stroke-width="2.600"/><rect x="0" y="6.800" width="4.500" height="2" fill="#f01818"/><rect x="11.500" y="7" width="4.500" height="2" fill="#f01818"/><path d="M10.200 6.500H16L13.100 10zM0 6.500H5.800L2.900 10z" fill="#000"/><path d="M.8 6.500H5M11 6.500H15.200" stroke="#10e8f0" stroke-width="1"/><path d="M6.300 6Q6.300 4 8 4Q9.900 4 9.900 5.700Q9.900 7 8 7.900V9.200" fill="none" stroke="#1030d0" stroke-width="1.500"/><rect x="7.200" y="10.200" width="1.600" height="1.600" fill="#1030d0"/></svg>
<svg class="ic" style="left:309.6px;top:94.9px;width:14.3px;height:14.3px" viewBox="0 0 16 16"><rect x="1" y="3" width="10" height="11.500" fill="#c8c8cc" stroke="#1020c0" stroke-width="1.600"/><path d="M2 13.200H10" stroke="#d0c030" stroke-width="1"/><rect x="11" y=".5" width="4.500" height="15.500" fill="#1828e0"/><path d="M13.200 1.500V15" stroke="#c0c8ff" stroke-width="1.400" stroke-dasharray="1.400 2"/></svg>
<svg class="ic" style="left:330.2px;top:94.9px;width:14.3px;height:14.3px" viewBox="0 0 16 16"><rect x="1.500" y="1" width="2" height="7.500" fill="#f01010" stroke="#400000" stroke-width=".5"/><rect x="7.500" y="1" width="7.500" height="5.500" rx="1" fill="#f8f8f8" stroke="#000" stroke-width="1"/><path d="M9.500 2.500V5M9.500 3.800L11.500 2.500M9.500 3.800L11.500 5M13 2.500V5" stroke="#000" stroke-width=".8"/><ellipse cx="7" cy="8.500" rx="1.800" ry="1" fill="#e0d020" stroke="#605800" stroke-width=".4"/><ellipse cx="4.500" cy="11" rx="1.500" ry="1" fill="#e818e8"/><path d="M6 10L11 14" stroke="#000" stroke-width="1.100"/><rect x="10.500" y="12.500" width="5" height="2.500" rx="1" fill="#e8e020" stroke="#000" stroke-width=".6"/></svg>
<svg class="ic" style="left:350.9px;top:94.9px;width:14.3px;height:14.3px" viewBox="0 0 16 16"><path d="M2 2.500Q2 1 3.500 1H13.500Q15 1 15 2.500V12.500Q15 14 13.500 14L12.500 15H4.500L3.500 14Q2 14 2 12.500z" fill="#ececec" stroke="#000" stroke-width="1.300"/><circle cx="8.500" cy="6" r="3" fill="#fff" stroke="#404040" stroke-width="1"/><circle cx="8.500" cy="6" r="1" fill="#808080"/><path d="M4 8V11" stroke="#404040" stroke-width="1"/></svg>
<svg class="ic" style="left:371.8px;top:94.9px;width:14.3px;height:14.3px" viewBox="0 0 16 16"><rect x="1.500" y="1.500" width="13" height="13" fill="#c0c4cc"/><rect x="3.500" y="3.500" width="9" height="9" fill="#e8e8e8" stroke="#000" stroke-width="1.300"/><path d="M6.500 5.500V10.500M6.500 8L9.500 5.500M6.500 8L9.500 10.500" stroke="#000" stroke-width=".9" fill="none"/><circle cx="3.500" cy="3.500" r="2" fill="#1020f0"/><circle cx="12.500" cy="3.500" r="2" fill="#1020f0"/><circle cx="3.500" cy="12.500" r="2" fill="#1020f0"/><circle cx="12.500" cy="12.500" r="2" fill="#1020f0"/></svg>
<svg class="ic" style="left:392.7px;top:94.9px;width:14.3px;height:14.3px" viewBox="0 0 16 16"><path d="M1 5.500L6 1L11.500 5V10.500L6.500 14L1 10z" fill="#10c010" stroke="#003800" stroke-width="1"/><path d="M1 5.500L6.500 9L11.500 5M6.500 9V14M3.500 3.500L9 7.500M3.800 7.500V11.500" stroke="#003800" stroke-width=".9" fill="none"/><path d="M9.500 9L14.500 14" stroke="#f01010" stroke-width="1.800"/><path d="M15.500 10V15.500H10z" fill="#f01010"/></svg>
<svg class="ic" style="left:413.6px;top:94.9px;width:14.3px;height:14.3px" viewBox="0 0 16 16"><path d="M1 5.500L6 1L11.500 5V10.500L6.500 14L1 10z" fill="#10c010" stroke="#003800" stroke-width="1"/><path d="M1 5.500L6.500 9L11.500 5M6.500 9V14M3.500 3.500L9 7.500M3.800 7.500V11.500" stroke="#003800" stroke-width=".9" fill="none"/><path d="M15.500 15L11 10.500" stroke="#f01010" stroke-width="1.600"/><path d="M9.500 9H14.500L9.500 14z" fill="#f01010"/></svg>
<svg class="ic" style="left:435.2px;top:94.9px;width:14.3px;height:14.3px" viewBox="0 0 16 16"><rect x="1" y="1" width="14" height="14.500" rx="1" fill="#fcfcfc" stroke="#000" stroke-width="1.500"/><path d="M2 14.500H14" stroke="#909090" stroke-width="1"/><path d="M3.500 4V10M3.500 7.500L7 4M4.800 6.500L7.200 10" stroke="#000" stroke-width="1.100" fill="none"/><path d="M8 11.500L13 3.500" stroke="#000" stroke-width="2.600"/><path d="M8.300 11L13 3.500" stroke="#f0e820" stroke-width="1.200"/><path d="M7.500 13L8 10.500L9.500 11.500z" fill="#000"/><circle cx="13.300" cy="2.500" r="1.300" fill="#e818e8"/></svg>
<svg class="ic" style="left:455.9px;top:94.9px;width:14.3px;height:14.3px" viewBox="0 0 16 16"><rect x="1" y="1" width="14" height="14.500" rx="1" fill="#fcfcfc" stroke="#000" stroke-width="1.500"/><path d="M2 14.500H14" stroke="#909090" stroke-width="1"/><path d="M3.500 4V10H5Q7.500 10 7.500 7Q7.500 4 5 4z" stroke="#000" stroke-width="1.100" fill="none"/><path d="M8 11.500L13 3.500" stroke="#000" stroke-width="2.600"/><path d="M8.300 11L13 3.500" stroke="#f0e820" stroke-width="1.200"/><path d="M7.500 13L8 10.500L9.500 11.500z" fill="#000"/><circle cx="13.300" cy="2.500" r="1.300" fill="#e818e8"/></svg>
<svg class="ic" style="left:475.8px;top:94.9px;width:14.3px;height:14.3px" viewBox="0 0 16 16"><rect x="1" y="1" width="14" height="14.500" rx="1" fill="#e8e8e8" stroke="#000" stroke-width="1.500"/><path d="M2.500 3.500H10M2.500 5.700H10M2.500 7.900H9M2.500 10.100H8M2.500 12.300H13.500" stroke="#303030" stroke-width="1.100"/><path d="M8.500 11.500L13 3.500" stroke="#000" stroke-width="2.600"/><path d="M8.800 11L13 3.500" stroke="#f0e820" stroke-width="1.200"/><circle cx="13.300" cy="2.500" r="1.300" fill="#e818e8"/></svg>
<svg class="ic" style="left:496.4px;top:94.9px;width:14.3px;height:14.3px" viewBox="0 0 16 16"><rect x="1" y="2" width="14.500" height="12.500" rx="1" fill="#d8d8d8" stroke="#000" stroke-width="1.300"/><path d="M5.500 2.500V14M10.500 2.500V14" stroke="#fff" stroke-width="1.600"/><path d="M1.500 5.500H15M1.500 11.500H15" stroke="#fff" stroke-width="1"/><path d="M1.500 8.500H15" stroke="#a01010" stroke-width="1.600"/></svg>
<svg class="ic" style="left:517.6px;top:94.9px;width:14.3px;height:14.3px" viewBox="0 0 16 16"><rect x="0" y="0" width="16" height="16" fill="#10c8d0"/><path d="M3.500 15V5M1 6L3.500 2L6 6z" fill="#000" stroke="#000" stroke-width="1.600"/><path d="M3.500 7V14" stroke="#606060" stroke-width=".7" stroke-dasharray="1 1.500"/><path d="M6.500 10L9.500 14.500L15.500 1" fill="none" stroke="#f01010" stroke-width="2"/></svg>
<svg class="ic" style="left:538.6px;top:94.9px;width:14.3px;height:14.3px" viewBox="0 0 16 16"><path d="M1 7.500L3.500 10.500L9 3" fill="none" stroke="#f01010" stroke-width="1.500"/><path d="M1 14.500H16" stroke="#000" stroke-width="1.300"/><path d="M4 14.500L12 6" stroke="#000" stroke-width=".8"/><path d="M6.500 12L14 3.500" stroke="#000" stroke-width="4.200"/><path d="M6.800 11.800L9 9.300" stroke="#e818e8" stroke-width="3"/><path d="M9 9.300L11 7" stroke="#fff" stroke-width="3"/><path d="M11 7L13.800 3.800" stroke="#f0e820" stroke-width="3"/></svg>
<svg class="ic" style="left:558.4px;top:94.9px;width:14.3px;height:14.3px" viewBox="0 0 16 16"><text x="8" y="13" font-family="Liberation Sans,sans-serif" font-size="11.500" font-weight="bold" text-anchor="middle" fill="#fff" stroke="#000" stroke-width="1.600" paint-order="stroke" letter-spacing=".5">LE</text></svg>
<svg class="ic" style="left:579.9px;top:94.9px;width:14.3px;height:14.3px" viewBox="0 0 16 16"><rect x="0" y="0" width="16" height="16" fill="#c0c0c0"/><path d="M4.500 5Q4.500 1.500 8.200 1.500Q12 1.500 12 4.800Q12 7 9.500 8.200Q8.500 9 8.500 11" fill="none" stroke="#a01010" stroke-width="2.200"/><circle cx="8.500" cy="13.800" r="1.400" fill="#a01010"/></svg>
<div class="tb" style="left:602px;top:89px;width:140.5px"></div>
<div class="grip" style="left:603.8px;top:90.5px;height:21px"></div><div class="grip" style="left:607.2px;top:90.5px;height:21px"></div>
<svg class="ic" style="left:617.0px;top:94.9px;width:14.3px;height:14.3px" viewBox="0 0 16 16"><rect x="0" y="0" width="16" height="14" fill="#f4f4f4"/><path d="M6 4.500L15 2.500V6L6 9z" fill="#fff" stroke="#000" stroke-width="1.100"/><path d="M1.500 9L6.500 7.500L8.500 10L3.500 12.500z" fill="#fff" stroke="#000" stroke-width="1.100"/><path d="M5 6L12.500 14.500" stroke="#1030e8" stroke-width="2.400"/><path d="M12 11L9.500 14" stroke="#000" stroke-width="1"/><circle cx="3.800" cy="3.300" r="2.600" fill="#30e0f0" stroke="#208090" stroke-width=".6"/></svg>
<svg class="ic" style="left:637.5px;top:94.9px;width:14.3px;height:14.3px" viewBox="0 0 16 16"><rect x="0" y="0" width="16" height="16" fill="#c0c0c0"/><path d="M1.500 6H10.500V15H1.500z" fill="#fff" stroke="#000" stroke-width="1.200"/><path d="M1.500 6L5.500 1.500H14.500L10.500 6z" fill="#901010" stroke="#000" stroke-width="1"/><path d="M10.500 6L14.500 1.500V10.500L10.500 15z" fill="#f0f0f0" stroke="#000" stroke-width="1"/><path d="M3 13.500L9 7.500M6 8V13" stroke="#000" stroke-width=".8"/></svg>
<svg class="ic" style="left:658.4px;top:94.9px;width:14.3px;height:14.3px" viewBox="0 0 16 16"><rect x="0" y="0" width="16" height="16" fill="#c0c0c0"/><path d="M1.500 6H10.500V15H1.500z" fill="#f0e818" stroke="#000" stroke-width="1.200"/><path d="M1.500 6L5.500 1.500H14.500L10.500 6z" fill="#901010" stroke="#000" stroke-width="1"/><path d="M10.500 6L14.500 1.500V10.500L10.500 15z" fill="#f0e818" stroke="#000" stroke-width="1"/><path d="M6 6.500V14.500M4 8.500H8M4 10.500H8M4 12.500H8" stroke="#f01010" stroke-width="1"/></svg>
<svg class="ic" style="left:679.5px;top:94.9px;width:14.3px;height:14.3px" viewBox="0 0 16 16"><rect x="0" y="0" width="9" height="16" fill="#f01010"/><rect x="9" y="0" width="7" height="16" fill="#f8f018"/><path d="M8.500 1L5.500 7.500H8L5 14.500L12 6H9L12.500 1z" fill="#fff" stroke="#000" stroke-width="1.100"/></svg>
<svg class="ic" style="left:700.0px;top:94.9px;width:14.3px;height:14.3px" viewBox="0 0 16 16"><rect x="0" y="0" width="16" height="16" fill="#c0c0c0"/><rect x="1.500" y="2" width="4" height="4" fill="#a01010" stroke="#000" stroke-width=".5"/><path d="M10 11.500L14 9L15 11L11 14z" fill="#a01010" stroke="#000" stroke-width=".5"/><path d="M5.500 2.500L9 2L14.500 9M2.500 6.500L4 10L10 13.500" fill="none" stroke="#000" stroke-width="1.200"/></svg>
<svg class="ic" style="left:720.9px;top:94.9px;width:14.3px;height:14.3px" viewBox="0 0 16 16"><circle cx="4" cy="3.800" r="3" fill="#10e0f0" stroke="#000" stroke-width="1"/><circle cx="11" cy="11" r="3" fill="#fff" stroke="#000" stroke-width="1.300"/><path d="M10.500 3L14.500 7.500M14.500 3L10.500 7.500" stroke="#000" stroke-width="1"/></svg>
<div class="tb" style="left:743.5px;top:89px;width:140.5px"></div>
<div class="grip" style="left:745.3px;top:90.5px;height:21px"></div><div class="grip" style="left:748.7px;top:90.5px;height:21px"></div>
<svg class="ic" style="left:758.0px;top:94.9px;width:14.3px;height:14.3px" viewBox="0 0 16 16"><rect x="0" y="0" width="16" height="16" fill="#c0c0c0"/><rect x="1" y="0" width="2.200" height="16" fill="#f018f0"/><rect x="3.500" y="1.500" width="11" height="8" rx="1" fill="#181818"/><path d="M5 3.500H13M5 6H13M5 8.200H13" stroke="#a8a8a8" stroke-width="1" stroke-dasharray="1.500 1.500"/><path d="M6.500 4.700H13M6.500 7.100H13" stroke="#a8a8a8" stroke-width="1" stroke-dasharray="1.500 1.500"/></svg>
<svg class="ic" style="left:779.1px;top:94.9px;width:14.3px;height:14.3px" viewBox="0 0 16 16"><path d="M1 5H5L6 6.500H12V14.500H1z" fill="#f0e880" stroke="#000" stroke-width="1.100"/><path d="M1 14.500L3.500 8.500H15L12 14.500z" fill="#f8f098" stroke="#000" stroke-width="1.100"/><path d="M5 10.500H12M4.500 12.500H11" stroke="#a09820" stroke-width=".8" stroke-dasharray="1 1"/><path d="M10.500 2.500Q10.500 .7 12.500 .7Q14.500 .7 14.500 2.300Q14.500 3.500 12.700 4.200V5.300" fill="none" stroke="#8018a8" stroke-width="1.400"/><rect x="12" y="6" width="1.500" height="1.400" fill="#8018a8"/></svg>
<svg class="ic" style="left:799.6px;top:94.9px;width:14.3px;height:14.3px" viewBox="0 0 16 16"><rect x="0" y="0" width="16" height="16" fill="#c0c0c0"/><circle cx="7.500" cy="7.500" r="5.300" fill="none" stroke="#000" stroke-width="1.400"/><path d="M9 13Q11.500 15.500 13 12.500" fill="none" stroke="#f01010" stroke-width="1.500"/><circle cx="12" cy="12" r="1.200" fill="#f01010"/></svg>
<svg class="ic" style="left:820.2px;top:94.9px;width:14.3px;height:14.3px" viewBox="0 0 16 16"><rect x="0" y="0" width="16" height="16" fill="#c0c0c0"/><circle cx="7.500" cy="7.500" r="5.300" fill="#c8c8c8" stroke="#f0e818" stroke-width="2"/><circle cx="7.500" cy="7.500" r="6.300" fill="none" stroke="#807800" stroke-width=".4"/><path d="M9 13Q11.500 15.500 13 12.500" fill="none" stroke="#f01010" stroke-width="1.500"/><circle cx="12" cy="12" r="1.200" fill="#f01010"/></svg>
<svg class="ic" style="left:842.4px;top:94.9px;width:14.3px;height:14.3px" viewBox="0 0 16 16"><rect x="1" y="1" width="14" height="14.500" rx="1" fill="#fcfcfc" stroke="#000" stroke-width="1.500"/><path d="M2 14.500H14" stroke="#909090" stroke-width="1"/><path d="M6.500 4V8.500Q6.500 10.200 5 10.200Q3.800 10.200 3.500 9" stroke="#000" stroke-width="1.300" fill="none"/><path d="M8 11.500L13 3.500" stroke="#000" stroke-width="2.600"/><path d="M8.300 11L13 3.500" stroke="#f0e820" stroke-width="1.200"/><path d="M7.500 13L8 10.500L9.500 11.500z" fill="#000"/><circle cx="13.300" cy="2.500" r="1.300" fill="#e818e8"/></svg>
<svg class="ic" style="left:862.2px;top:94.9px;width:14.3px;height:14.3px" viewBox="0 0 16 16"><rect x="1" y="1" width="6" height="4" rx="1" fill="#f01010" stroke="#800000" stroke-width=".5"/><path d="M2.500 2.500H5.500M2.500 3.700H5.500" stroke="#fff" stroke-width=".8"/><rect x="8" y=".5" width="7.500" height="4.500" fill="#fff" stroke="#e818e8" stroke-width="1.300"/><path d="M10 2.700H13.500" stroke="#e818e8" stroke-width="1.200"/><path d="M2 5V14H7" fill="none" stroke="#1828e8" stroke-width="2"/><rect x="6.500" y="6.500" width="8.500" height="3.500" rx="1" fill="#10a010" stroke="#003800" stroke-width=".5"/><path d="M8 8.200H13.500" stroke="#c8f0c8" stroke-width="1"/><rect x="8" y="11.500" width="5.500" height="3.500" fill="#f01010" stroke="#600000" stroke-width=".5"/><rect x="13.500" y="11.500" width="2" height="3.500" fill="#10b8c8"/><path d="M9 13.200H12.500" stroke="#fff" stroke-width=".8"/></svg>
<div class="a" style="left:4px;top:113.500px;width:939px;height:2px;background:#808080"></div>
<div class="a" style="left:3px;top:114px;width:1px;height:438px;background:#b8b5ae"></div><div class="a" style="left:4px;top:114px;width:1.500px;height:438px;background:#585858"></div>
<div class="a" style="left:941.500px;top:114.500px;width:1.800px;height:453.500px;background:#fff"></div>
<div class="a" style="left:4.600px;top:115.200px;width:936.900px;height:436.100px;background:#000"></div>
<div class="a" style="left:4.600px;top:551.300px;width:56px;height:.9px;background:#707070"></div>
<svg class="a" style="left:0;top:0" width="947" height="655" viewBox="0 0 947 655"><rect x="606.300" y="259.500" width="16.700" height="5.200" fill="#ffff00" opacity=".9"/><g fill="none" stroke="#0000ff" stroke-width="1.12"><rect x="259.3" y="119" width="428.5" height="428.5"/><circle cx="339.4" cy="322.9" r="22.4"/><rect x="413.5" y="273.6" width="120.20000000000005" height="120.0" rx="12" ry="12"/><path d="M416.3 277.89H530.9"/><path d="M414.0 282.17H533.2"/><path d="M413.5 286.46H533.7"/><path d="M413.5 290.74H533.7"/><path d="M413.5 295.03H533.7"/><path d="M413.5 299.31H533.7"/><path d="M413.5 303.60H533.7"/><path d="M413.5 307.89H533.7"/><path d="M413.5 312.17H533.7"/><path d="M413.5 316.46H533.7"/><path d="M413.5 320.74H533.7"/><path d="M413.5 325.03H533.7"/><path d="M413.5 329.31H533.7"/><path d="M413.5 333.60H533.7"/><path d="M413.5 337.89H533.7"/><path d="M413.5 342.17H533.7"/><path d="M413.5 346.46H533.7"/><path d="M413.5 350.74H533.7"/><path d="M413.5 355.03H533.7"/><path d="M413.5 359.31H533.7"/><path d="M413.5 363.60H533.7"/><path d="M413.5 367.89H533.7"/><path d="M413.5 372.17H533.7"/><path d="M413.5 376.46H533.7"/><path d="M413.5 380.74H533.7"/><path d="M414.0 385.03H533.2"/><path d="M416.3 389.31H530.9"/><path d="M587.5 245.4 H619 A8 8 0 0 1 627.1 253.400 V460 A11 11 0 0 1 616 470.8 H455.600 A10 10 0 0 1 445.600 460.800 V442.400 A10 10 0 0 1 455.600 432.400 H582 A5.500 5.500 0 0 0 587.500 427 Z"/><path d="M594 251.8 H615.700 A5 5 0 0 1 620.700 256.800 V458 A6 6 0 0 1 614.700 463.900 H456.500 A5 5 0 0 1 451.500 458.900 V444.200 A5 5 0 0 1 456.500 439.200 H583 A11 11 0 0 0 594 428.200 Z"/><path d="M600.5 258.2 H613.800 V457.400 H458 V446.200 H583.500 A17 17 0 0 0 600.500 429.200 Z"/><path d="M597 264.500 H606.800 V450.700 H588.800 A22 22 0 0 0 606.600 428"/></g><g fill="none" stroke="#ffff00" stroke-width="1.05"><path d="M301.7 161.3L645.7 161.3"/><path d="M645.7 161.3L645.7 505.1"/><path d="M645.7 505.1L312.0 505.1"/><path d="M301.7 161.3L267.8 522.0"/><path d="M324.5 340.0L304.0 497.0"/><path d="M306.0 505.0L284.0 522.0"/><path d="M306.5 506.5L285.0 525.5"/><path d="M413.5 290.8L278.5 519.0"/><path d="M588.0 266.0L283.5 523.0"/><path d="M431.0 288.0L588.0 264.5"/><path d="M339.5 344.3L531.0 391.5"/><path d="M586.6 265.0L564.9 541.0"/><path d="M273.0 538.8L392.0 546.3"/></g><g fill="#ffff00"><rect x="267.8" y="519.0" width="10.2" height="20.3"/><rect x="278.0" y="519.0" width="7.0" height="15.4" opacity="0.95"/><rect x="278.0" y="534.4" width="8.2" height="2.6" opacity="0.8"/><rect x="301.0" y="484.6" width="12.0" height="21.0"/><rect x="313.0" y="490.0" width="7.2" height="13.0" opacity="0.95"/><rect x="413.2" y="270.2" width="10.8" height="20.8"/><rect x="424.0" y="275.1" width="7.0" height="15.9" opacity="0.95"/><rect x="430.6" y="271.2" width="8.3" height="1.5" opacity="0.8"/><rect x="586.1" y="244.0" width="11.9" height="21.0" opacity="0.97"/><rect x="598.0" y="249.8" width="6.4" height="12.8" opacity="0.95"/><rect x="301.3" y="157.4" width="10.7" height="4.2"/><rect x="312.0" y="158.0" width="6.4" height="2.5" opacity="0.75"/><rect x="645.5" y="157.0" width="8.9" height="5.0" opacity="0.85"/><rect x="656.0" y="158.0" width="5.0" height="2.0" opacity="0.75"/><rect x="645.6" y="500.5" width="9.4" height="5.1" opacity="0.85"/><rect x="656.0" y="500.8" width="4.5" height="2.0" opacity="0.75"/><rect x="355.0" y="306.0" width="17.5" height="2.0" opacity="0.75"/><rect x="362.0" y="321.0" width="17.0" height="3.0" opacity="0.85"/><rect x="324.0" y="334.7" width="10.3" height="5.3"/><rect x="334.3" y="335.5" width="7.0" height="2.0" opacity="0.7"/><rect x="336.4" y="343.0" width="8.3" height="2.6" opacity="0.85"/><rect x="515.0" y="390.5" width="19.0" height="4.0" opacity="0.9"/><rect x="392.0" y="535.5" width="9.0" height="11.5"/><rect x="401.0" y="539.0" width="9.0" height="8.0" opacity="0.9"/><rect x="410.0" y="543.0" width="7.4" height="4.0" opacity="0.7"/><rect x="487.7" y="544.5" width="17.0" height="2.5" opacity="0.9"/><rect x="564.5" y="538.5" width="9.5" height="8.5" opacity="0.95"/><rect x="574.0" y="538.5" width="8.4" height="2.5" opacity="0.7"/><rect x="574.0" y="544.0" width="8.4" height="3.0" opacity="0.8"/></g><g fill="#000" opacity=".75"><rect x="271.1" y="522.3" width=".9" height=".9"/><rect x="274.0" y="520.9" width=".9" height=".9"/><rect x="273.0" y="526.4" width=".9" height=".9"/><rect x="278.8" y="526.6" width=".9" height=".9"/><rect x="278.7" y="525.5" width=".9" height=".9"/><rect x="278.9" y="520.8" width=".9" height=".9"/><rect x="280.8" y="531.0" width=".9" height=".9"/><rect x="279.2" y="522.6" width=".9" height=".9"/><rect x="282.0" y="532.7" width=".9" height=".9"/><rect x="282.4" y="535.3" width=".9" height=".9"/><rect x="311.8" y="486.0" width=".9" height=".9"/><rect x="310.5" y="490.7" width=".9" height=".9"/><rect x="303.0" y="487.4" width=".9" height=".9"/><rect x="304.7" y="501.0" width=".9" height=".9"/><rect x="303.4" y="496.4" width=".9" height=".9"/><rect x="308.2" y="492.4" width=".9" height=".9"/><rect x="316.6" y="491.2" width=".9" height=".9"/><rect x="313.8" y="492.9" width=".9" height=".9"/><rect x="317.4" y="495.4" width=".9" height=".9"/><rect x="315.3" y="497.2" width=".9" height=".9"/><rect x="316.1" y="493.9" width=".9" height=".9"/><rect x="318.0" y="498.5" width=".9" height=".9"/><rect x="314.9" y="497.1" width=".9" height=".9"/><rect x="418.6" y="287.6" width=".9" height=".9"/><rect x="420.5" y="276.3" width=".9" height=".9"/><rect x="422.8" y="273.0" width=".9" height=".9"/><rect x="417.6" y="285.3" width=".9" height=".9"/><rect x="425.3" y="282.6" width=".9" height=".9"/><rect x="424.7" y="285.2" width=".9" height=".9"/><rect x="428.7" y="283.9" width=".9" height=".9"/><rect x="429.3" y="280.1" width=".9" height=".9"/><rect x="428.3" y="284.2" width=".9" height=".9"/><rect x="427.7" y="282.2" width=".9" height=".9"/><rect x="429.1" y="289.2" width=".9" height=".9"/><rect x="427.1" y="285.2" width=".9" height=".9"/><rect x="587.2" y="258.2" width=".9" height=".9"/><rect x="593.3" y="263.9" width=".9" height=".9"/><rect x="595.1" y="250.0" width=".9" height=".9"/><rect x="590.6" y="257.5" width=".9" height=".9"/><rect x="586.8" y="253.5" width=".9" height=".9"/><rect x="588.3" y="246.8" width=".9" height=".9"/><rect x="587.2" y="259.5" width=".9" height=".9"/><rect x="587.9" y="249.3" width=".9" height=".9"/><rect x="590.7" y="261.5" width=".9" height=".9"/><rect x="587.4" y="253.3" width=".9" height=".9"/><rect x="601.2" y="260.3" width=".9" height=".9"/><rect x="602.5" y="260.1" width=".9" height=".9"/><rect x="599.9" y="255.0" width=".9" height=".9"/><rect x="600.3" y="260.3" width=".9" height=".9"/><rect x="603.2" y="252.0" width=".9" height=".9"/><rect x="599.4" y="252.9" width=".9" height=".9"/><rect x="303.9" y="159.2" width=".9" height=".9"/><rect x="315.4" y="158.8" width=".9" height=".9"/><rect x="646.0" y="159.0" width=".9" height=".9"/><rect x="648.7" y="159.5" width=".9" height=".9"/><rect x="653.6" y="503.5" width=".9" height=".9"/><rect x="650.2" y="503.2" width=".9" height=".9"/><rect x="366.3" y="306.5" width=".9" height=".9"/><rect x="376.4" y="322.7" width=".9" height=".9"/><rect x="332.2" y="338.2" width=".9" height=".9"/><rect x="522.4" y="392.0" width=".9" height=".9"/><rect x="517.3" y="392.6" width=".9" height=".9"/><rect x="393.0" y="536.7" width=".9" height=".9"/><rect x="394.1" y="537.6" width=".9" height=".9"/><rect x="395.1" y="536.5" width=".9" height=".9"/><rect x="401.5" y="540.5" width=".9" height=".9"/><rect x="402.3" y="541.9" width=".9" height=".9"/><rect x="401.7" y="545.2" width=".9" height=".9"/><rect x="406.1" y="540.5" width=".9" height=".9"/><rect x="412.0" y="544.4" width=".9" height=".9"/><rect x="493.8" y="545.1" width=".9" height=".9"/><rect x="571.8" y="546.0" width=".9" height=".9"/><rect x="568.7" y="542.4" width=".9" height=".9"/><rect x="565.7" y="539.7" width=".9" height=".9"/><rect x="567.7" y="540.9" width=".9" height=".9"/><rect x="580.2" y="539.2" width=".9" height=".9"/><rect x="574.7" y="545.9" width=".9" height=".9"/></g><g fill="none" stroke="#e8e8e8" stroke-width="1"><rect x="263.500" y="535.500" width="8.500" height="8.500"/><path d="M267.500 535V498 M263.500 498 L267.500 488 L271.500 498Z M263.500 539.500H272 M267.500 535.500V544"/><path d="M272 539.500H308.500 M308.500 536 L319.500 539.500 L308.500 543Z"/><path d="M265 468.500 L268.800 474 L272.600 468.500 M268.800 474 V480"/><path d="M329 535.500 L336.500 545 M336.500 535.500 L329 545"/></g><rect x="855" y="331.400" width="5.800" height="5.800" fill="none" stroke="#f4f4f4" stroke-width="1.100"/></svg>
<svg class="a" style="left:0;top:545px" width="947" height="30" viewBox="0 545 947 30"><rect x="5.5" y="552" width="13.500" height="12.500" fill="#d4d0c8"/><path d="M6.0 564.500V552.500H19.0" fill="none" stroke="#fff"/><path d="M18.5 552.500V564H6.0" fill="none" stroke="#808080"/><rect x="19" y="552" width="13.500" height="12.500" fill="#d4d0c8"/><path d="M19.5 564.500V552.500H32.5" fill="none" stroke="#fff"/><path d="M32 552.500V564H19.5" fill="none" stroke="#808080"/><rect x="32.5" y="552" width="13.500" height="12.500" fill="#d4d0c8"/><path d="M33.0 564.500V552.500H46.0" fill="none" stroke="#fff"/><path d="M45.5 552.500V564H33.0" fill="none" stroke="#808080"/><rect x="46" y="552" width="13.500" height="12.500" fill="#d4d0c8"/><path d="M46.5 564.500V552.500H59.5" fill="none" stroke="#fff"/><path d="M59 552.500V564H46.5" fill="none" stroke="#808080"/><path d="M9.500 554.500v7.500" stroke="#808080" stroke-width="1.300"/><path d="M15.500 554.300v8L11 558.300z" fill="#808080"/><path d="M28 554.300v8L23.500 558.300z" fill="#808080"/><path d="M37 554.300v8L41.500 558.300z" fill="#808080"/><path d="M50 554.300v8L54.500 558.300z" fill="#808080"/><path d="M56 554.500v7.500" stroke="#808080" stroke-width="1.300"/><path d="M59.500 551L65 564.500H102L107.200 551z" fill="#000"/><path d="M102.500 564.500L107 552.500" stroke="#fff" stroke-width="1.200"/><path d="M104 564H153.300L158 552M153.300 564H202L206.700 552" fill="none" stroke="#404040" stroke-width="1.100"/></svg>
<div class="t" style="left:70.8px;top:552.8px;font-size:10.5px;color:#fff;transform:scaleX(0.8951);transform-origin:0 0;">Model</div>
<div class="t" style="left:112.7px;top:552.8px;font-size:10.5px;transform:scaleX(0.8885);transform-origin:0 0;">Layout1</div>
<div class="t" style="left:162.6px;top:552.8px;font-size:10.5px;transform:scaleX(0.9019);transform-origin:0 0;">Layout2</div>
<div class="a" style="left:4px;top:566.100px;width:939.300px;height:1.800px;background:#fff"></div>
<div class="a" style="left:4px;top:571.100px;width:939px;height:1.900px;background:#404040"></div>
<div class="grip" style="left:9px;top:580.500px;height:45px"></div><div class="grip" style="left:12.500px;top:580.500px;height:45px"></div>
<div class="sunk2" style="left:18px;top:580.500px;width:918px;height:47.500px"></div>
<div class="a" style="left:20px;top:610.300px;width:902px;height:1.300px;background:#808080"></div>
<div class="t" style="left:21.3px;top:584.1px;font-size:11.6px;font-family:'Liberation Mono',monospace;transform:scaleX(1.0364);transform-origin:0 0;">[All/Center/Dynamic/Extents/Previous/Scale/Window/Object] &lt;real time&gt;: E</div>
<div class="t" style="left:21.3px;top:614.6px;font-size:11.6px;font-family:'Liberation Mono',monospace;transform:scaleX(1.0364);transform-origin:0 0;">Command:</div>
<div class="a" style="left:922px;top:582.500px;width:14px;height:45px;background:#d4d0c8"></div>
<div class="btn" style="left:922px;top:582.500px;width:14px;height:13px"><svg class="a" style="left:3px;top:3px" width="6.500" height="4" viewBox="0 0 7 4"><path d="M0 4h7L3.500 0z" fill="#000"/></svg></div>
<div class="btn" style="left:922px;top:597px;width:14px;height:13px"><svg class="a" style="left:3px;top:4px" width="6.500" height="4" viewBox="0 0 7 4"><path d="M0 0h7L3.500 4z" fill="#000"/></svg></div>
<div class="a" style="left:865px;top:612px;width:57px;height:15.500px;background:#eceae6"></div>
<div class="btn" style="left:865px;top:612px;width:14.500px;height:15.500px"><svg class="a" style="left:3.500px;top:3.500px" width="4" height="7" viewBox="0 0 4 7"><path d="M4 0v7L0 3.500z" fill="#000"/></svg></div>
<div class="btn" style="left:879.500px;top:612px;width:14px;height:15.500px"></div>
<div class="btn" style="left:907px;top:612px;width:14.500px;height:15.500px"><svg class="a" style="left:5px;top:3.500px" width="4" height="7" viewBox="0 0 4 7"><path d="M0 0v7L4 3.500z" fill="#000"/></svg></div>
<div class="a" style="left:4px;top:629.300px;width:939px;height:1.100px;background:#a9a9a9"></div><div class="a" style="left:4px;top:630.900px;width:939px;height:1.300px;background:#fff"></div>
<div class="a" style="left:8px;top:634px;width:218px;height:15.800px;border:1px solid #8a8a8a"></div>
<div class="t" style="left:10.6px;top:636.8px;font-size:10.5px;transform:scaleX(0.9315);transform-origin:0 0;">17.22122112, 6.07987394, 0.00000000</div>
<div class="sb" style="left:230px;width:30.0px"></div>
<div class="t" style="left:232.2px;top:636.8px;font-size:10.5px;transform:scaleX(0.9023);transform-origin:0 0;">SNAP</div>
<div class="sb" style="left:263.5px;width:27.2px"></div>
<div class="t" style="left:265.6px;top:636.8px;font-size:10.5px;transform:scaleX(0.8914);transform-origin:0 0;">GRID</div>
<div class="sb" style="left:295.4px;width:38.0px"></div>
<div class="t" style="left:297.3px;top:636.8px;font-size:10.5px;transform:scaleX(0.9066);transform-origin:0 0;">ORTHO</div>
<div class="sb" style="left:337.7px;width:35.8px"></div>
<div class="t" style="left:339.6px;top:636.8px;font-size:10.5px;transform:scaleX(0.8905);transform-origin:0 0;">POLAR</div>
<div class="sb" style="left:377.5px;width:37.1px"></div>
<div class="t" style="left:379.7px;top:636.8px;font-size:10.5px;transform:scaleX(0.8786);transform-origin:0 0;">OSNAP</div>
<div class="sb" style="left:418.3px;width:42.4px"></div>
<div class="t" style="left:420.2px;top:636.8px;font-size:10.5px;transform:scaleX(0.8685);transform-origin:0 0;">OTRACK</div>
<div class="sb" style="left:465.5px;width:30.3px"></div>
<div class="t" style="left:467.2px;top:636.8px;font-size:10.5px;transform:scaleX(0.8873);transform-origin:0 0;">DUCS</div>
<div class="sb" style="left:500px;width:23.7px"></div>
<div class="t" style="left:502.0px;top:636.8px;font-size:10.5px;transform:scaleX(0.8796);transform-origin:0 0;">DYN</div>
<div class="sb" style="left:527.7px;width:24.3px"></div>
<div class="t" style="left:529.8px;top:636.8px;font-size:10.5px;transform:scaleX(0.9259);transform-origin:0 0;">LWT</div>
<div class="sb" style="left:556.300px;width:38.300px;border-color:#404040 #fff #fff #404040;background:#eceae6"></div>
<div class="t" style="left:559.5px;top:637.4px;font-size:10.5px;transform:scaleX(0.8811);transform-origin:0 0;">MODEL</div>
<div class="t" style="left:711.7px;top:636.8px;font-size:10.5px;transform:scaleX(0.9063);transform-origin:0 0;">Annotation Scale:</div>
<div class="t" style="left:795.3px;top:636.8px;font-size:10.5px;transform:scaleX(0.8701);transform-origin:0 0;">1:1</div>
<svg class="a" style="left:811.500px;top:640.500px" width="7" height="4" viewBox="0 0 8 5"><path d="M0 0h8L4 5z" fill="#000"/></svg>
<svg class="a" style="left:829px;top:634.500px" width="14" height="14" viewBox="0 0 16 16"><path d="M2 14.500L7 3.500L12 14.500L7 10.500z" fill="#e8f0fc" stroke="#2a62b8" stroke-width="1.300"/><path d="M4.500 11H9.500" stroke="#2a62b8" stroke-width="1"/><circle cx="11.500" cy="4" r="3" fill="#fff4a0" stroke="#e0c020" stroke-width="1"/><path d="M10.500 7.500H12.500V9H10.500z" fill="#8090a0"/></svg>
<svg class="a" style="left:851px;top:634.500px" width="14" height="14" viewBox="0 0 16 16"><path d="M2 14.500L7 4.500L12 14.500L7 10.500z" fill="#e4e6ea" stroke="#98a0ac" stroke-width="1.300"/><path d="M14.500 1L8 9.500" stroke="#a8b0bc" stroke-width="2.200"/><path d="M10 5L13.500 7.500" stroke="#c8ccd4" stroke-width="1"/></svg>
<div class="sunk" style="left:873.500px;top:634.500px;width:21px;height:16px"></div>
<svg class="a" style="left:877px;top:635.500px" width="14" height="14" viewBox="0 0 16 16"><path d="M8 7V4.500Q8 1.500 11 1.500Q14 1.500 14 4.500V5.500" fill="none" stroke="#d8a818" stroke-width="1.800"/><rect x="2" y="7" width="9.500" height="8" rx="1" fill="#f4cc1c" stroke="#6a5000" stroke-width="1"/><path d="M3 9.500H10.500M3 11.500H10.500M3 13.500H10.500" stroke="#3a2c00" stroke-width="1"/></svg>
<svg class="a" style="left:900px;top:643px" width="7" height="4" viewBox="0 0 8 5"><path d="M0 0h8L4 5z" fill="#000"/></svg>
<div class="a" style="left:914px;top:634px;width:14.800px;height:15px;border:1.300px solid #1f5596;border-radius:1.500px;background:#eaf2fb"></div><div class="a" style="left:916.500px;top:636.500px;width:9.800px;height:10px;border:1.200px solid #1f5596;background:linear-gradient(135deg,#c4dcf2,#8fb8e0)"></div>
<svg class="a" style="left:931px;top:639px" width="12" height="12" viewBox="0 0 12 12"><path d="M11 1L1 11M11 5L5 11M11 9L9 11" stroke="#808080" stroke-width="1"/><path d="M12 1L2 11M12 5L6 11M12 9L10 11" stroke="#fff" stroke-width="1"/></svg>
</body></html>
